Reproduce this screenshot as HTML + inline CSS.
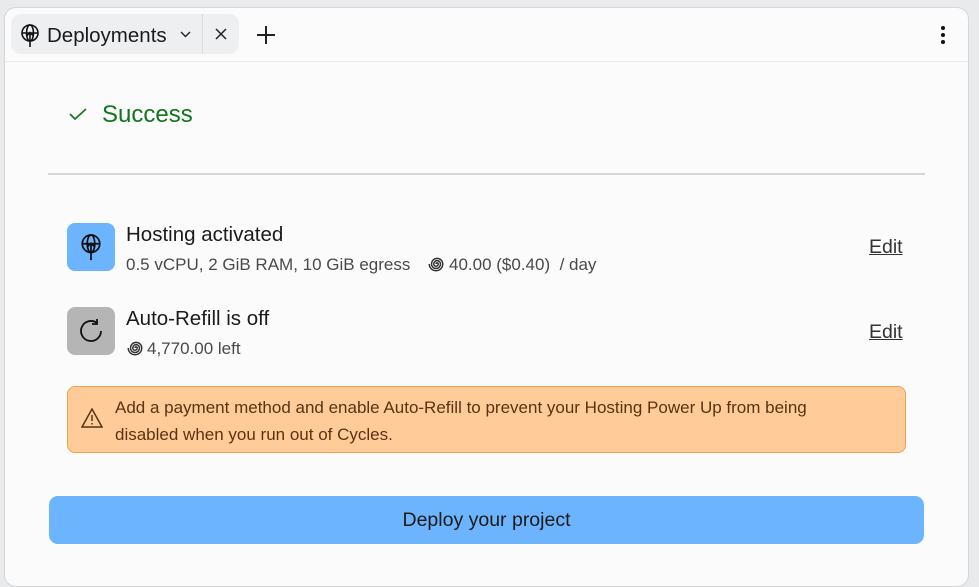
<!DOCTYPE html>
<html><head><style>
*{box-sizing:border-box;margin:0;padding:0}
body{width:979px;height:566px;background:#e9eaec;font-family:"Liberation Sans",sans-serif;overflow:hidden;position:relative;color:#1b1b1b}
.panel{position:absolute;left:4px;top:7px;width:965px;height:580px;background:#fbfbfb;border:1px solid #d6d6d8;border-radius:12px}
.tab{position:absolute;width:228px;height:40px;background:#eeeff1;border-radius:10px}
.tab .sep{position:absolute;left:191px;top:0;width:1px;height:40px;background:#dcdcde}
.abs{position:absolute}
.line{position:absolute;left:48px;top:173px;width:877px;height:2px;background:#d5d5d7}
.ic{position:absolute;width:48px;height:48px;border-radius:8px}
.t1{font-size:20.5px;color:#1b1b1b}
.t2{font-size:17px;color:#4a4a4a;white-space:nowrap}
.edit{font-size:19.5px;text-decoration:underline;color:#333}
.warn{position:absolute;left:67px;top:386px;width:839px;height:67px;background:#ffcc99;border:1px solid #f0a050;border-radius:8px}
.btn{position:absolute;left:49px;top:496px;width:875px;height:48px;background:#6cb4fd;border-radius:9px;text-align:center;line-height:48px;font-size:19.5px;color:#1b1b1b}
</style></head><body>
<div class="panel"></div>
<div class="abs" style="left:5px;top:8px;width:963px;height:54px;border-bottom:1px solid #e8e8ea;border-radius:11px 11px 0 0"></div>
<div class="tab" style="left:11px;top:14px"><div class="sep"></div>
<svg class="abs" style="left:8px;top:9px" width="22" height="24" viewBox="0 0 22 24" fill="none" stroke="#111" stroke-width="1.6"><circle cx="11" cy="10" r="8"/><ellipse cx="11" cy="10" rx="3.5" ry="8"/><path d="M3 10h16M11 9v15M7.5 13l3.5-3.5 3.5 3.5"/></svg>
<div class="abs" style="left:36px;top:10px;font-size:20.5px">Deployments</div>
<svg class="abs" style="left:169px;top:17px" width="11" height="7" viewBox="0 0 11 7" fill="none" stroke="#222" stroke-width="1.4"><path d="M1 1l4.5 4.5L10 1"/></svg>
<svg class="abs" style="left:204px;top:14px" width="12" height="12" viewBox="0 0 12 12" stroke="#222" stroke-width="1.5"><path d="M1 1l10 10M11 1L1 11"/></svg>
</div>
<svg class="abs" style="left:256px;top:25px" width="20" height="20" viewBox="0 0 20 20" stroke="#222" stroke-width="2"><path d="M10 1v18M1 10h18"/></svg>
<svg class="abs" style="left:940px;top:25px" width="6" height="20" viewBox="0 0 6 20" fill="#111"><circle cx="3" cy="3" r="2"/><circle cx="3" cy="10" r="2"/><circle cx="3" cy="17" r="2"/></svg>
<svg class="abs" style="left:69px;top:108px" width="18" height="13" viewBox="0 0 18 13" fill="none" stroke="#197a2a" stroke-width="1.8"><path d="M1 6l5 5L17 1"/></svg>
<div class="abs" style="left:102px;top:101px;font-size:24px;color:#13741f">Success</div>
<div class="line"></div>
<div class="ic" style="left:67px;top:223px;background:#6cb4fd"></div>
<svg class="abs" style="left:79px;top:232px" width="24" height="30" viewBox="0 0 22 26" fill="none" stroke="#111" stroke-width="1.6"><circle cx="11" cy="10" r="8"/><ellipse cx="11" cy="10" rx="3.5" ry="8"/><path d="M3 10h16M11 9v16M7.5 13l3.5-3.5 3.5 3.5"/></svg>
<div class="abs t1" style="left:126px;top:223px">Hosting activated</div>
<div class="abs t2" style="left:126px;top:255px">0.5 vCPU, 2 GiB RAM, 10 GiB egress</div>
<svg class="abs" style="left:427px;top:255px" width="18" height="18" viewBox="0 0 16 16" fill="none" stroke="#333" stroke-width="1.3"><path d="M8 8a1 1 0 0 1 2 0a2 2 0 0 1-4 0a3 3 0 0 1 6 0a4 4 0 0 1-8 0a5 5 0 0 1 10 0a6 6 0 0 1-12 0"/></svg>
<div class="abs t2" style="left:449px;top:255px">40.00 ($0.40) &nbsp;/ day</div>
<div class="abs edit" style="left:869px;top:236px">Edit</div>
<div class="ic" style="left:67px;top:307px;background:#b5b5b5"></div>
<svg class="abs" style="left:77px;top:317px" width="28" height="28" viewBox="0 0 28 28" fill="none" stroke="#111" stroke-width="1.8"><path d="M24 14A10 10 0 1 1 20 6M20 2v5h-5"/></svg>
<div class="abs t1" style="left:126px;top:307px">Auto-Refill is off</div>
<svg class="abs" style="left:126px;top:339px" width="18" height="18" viewBox="0 0 16 16" fill="none" stroke="#333" stroke-width="1.3"><path d="M8 8a1 1 0 0 1 2 0a2 2 0 0 1-4 0a3 3 0 0 1 6 0a4 4 0 0 1-8 0a5 5 0 0 1 10 0a6 6 0 0 1-12 0"/></svg>
<div class="abs t2" style="left:147px;top:339px">4,770.00 left</div>
<div class="abs edit" style="left:869px;top:321px">Edit</div>
<div class="warn">
<svg class="abs" style="left:13px;top:21px" width="22" height="20" viewBox="0 0 22 20" fill="none" stroke="#5a3310" stroke-width="1.5"><path d="M11 1L1 19h20z M11 7v6M11 15v1.5"/></svg>
<div class="abs" style="left:47px;top:7px;font-size:17px;line-height:27px;color:#5a3310;width:745px">Add a payment method and enable Auto-Refill to prevent your Hosting Power Up from being disabled when you run out of Cycles.</div>
</div>
<div class="btn">Deploy your project</div>
</body></html>
